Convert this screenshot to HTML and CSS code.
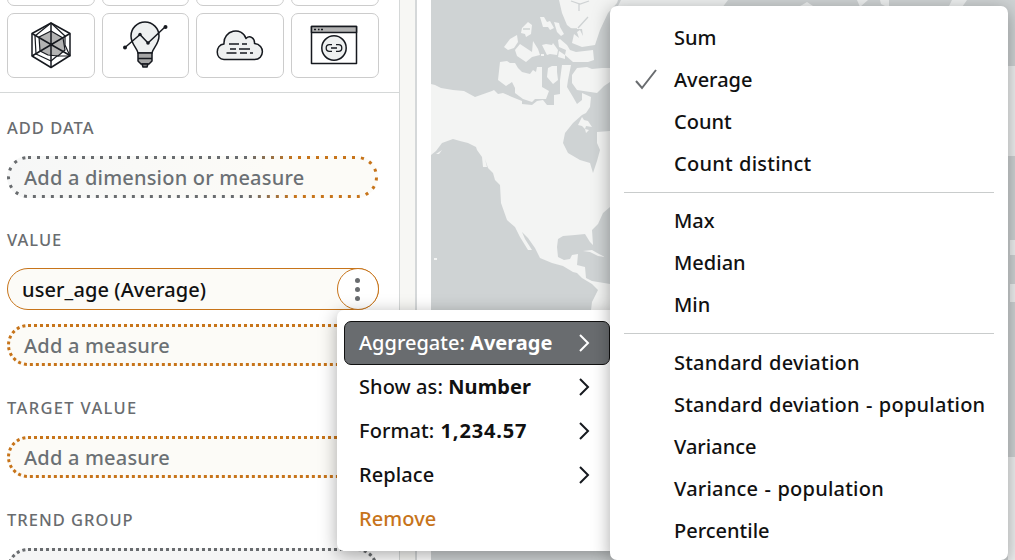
FILE: index.html
```
<!DOCTYPE html>
<html lang="en">
<head>
<meta charset="utf-8">
<title>Field wells</title>
<link rel="stylesheet" href="styles.css">
</head>
<body>
<div class="app">
  <aside class="sidebar">
    <div class="tiles">
      <div class="tile"></div><div class="tile"></div><div class="tile"></div><div class="tile"></div>
      <div class="tile">
        <svg width="88" height="65" viewBox="7 13 88 65" class="ink">
          <path d="M51 23 70 33.500v22L51 67.500 32 56V33.500z" fill="#fff"/>
          <path d="M51 31 63 38 65 50 58 56 48 55 40 51 39 37z" fill="#b3b3b3" stroke-width="1.200"/>
          <path d="M51 23 65 36v9l5 11H57l-6 5-15-7-1-18z" fill="none" stroke-width="1.200"/>
          <path d="M51 23v44M32 33.500l38 22M70 33.500 32 56" fill="none"/>
        </svg>
      </div>
      <div class="tile">
        <svg width="88" height="65" viewBox="102 13 88 65" class="ink">
          <path d="M138 53c-1-5-7-9-7-17a14 14 0 0 1 28 0c0 8-6 12-7 17z" fill="#eef0f0"/>
          <path d="M140 53h12v8l-3 3h-8l-3-3v-8z" fill="#a5a5a5"/><path d="M138 58.500h14"/><path d="M142 64h6l-1 3h-4z" fill="#777"/>
          <path d="M125 47.500 140 34.500 148 43 165 27" fill="none"/>
          <g fill="#16191f" stroke="none"><circle cx="125" cy="47.500" r="2"/><circle cx="140" cy="34.500" r="1.700"/><circle cx="148" cy="43" r="1.800"/><circle cx="165.500" cy="27" r="2"/></g>
        </svg>
      </div>
      <div class="tile">
        <svg width="88" height="65" viewBox="196 13 88 65" class="ink">
          <path d="M224 59.500c-9 0-9-15 0-15.500-1-14 18-18 22-5.500 4-4 9 0 8.500 5 11 1 10 16 0 16z" fill="#eef0f0"/>
          <path d="M229 44h10M242 44h5M230 49h6M239 49h11M226.500 53h10M240 53h7M250 53h3" stroke-width="1.500"/>
        </svg>
      </div>
      <div class="tile">
        <svg width="88" height="65" viewBox="291 13 88 65" class="ink">
          <path d="M311.500 26.500h45v37h-45z" fill="#fff"/><path d="M311.500 26.500h45v6h-45z" fill="#b3b3b3"/>
          <path d="M314 29.500h2M318 29.500h1.500M321 29.500h2"/>
          <circle cx="334" cy="48" r="12.200" fill="#eef0f0"/>
          <path d="M332 44.700h-2.500a3.300 3.300 0 0 0 0 6.600h2.500M336 44.700h2.500a3.300 3.300 0 0 1 0 6.600H336M331 48h6" fill="none" stroke-width="1.300"/>
        </svg>
      </div>
    </div>
    <div class="wells">
      <h2>ADD DATA</h2>
      <div class="well mixed">
        <svg class="outline" width="371" height="42"><defs><linearGradient id="fade"><stop offset=".65" stop-color="#696c6f"/><stop offset=".78" stop-color="#c7741a"/></linearGradient></defs><rect x="1.500" y="1.500" width="368" height="39" rx="19.500"/></svg>
        <span>Add a dimension or measure</span>
      </div>
      <h2>VALUE</h2>
      <div class="field"><span>user_age (Average)</span><button class="more" aria-label="Options"><i></i><i></i><i></i></button></div>
      <div class="well orange"><svg class="outline" width="371" height="42"><rect x="1.500" y="1.500" width="368" height="39" rx="19.500"/></svg><span>Add a measure</span></div>
      <h2 class="spaced">TARGET VALUE</h2>
      <div class="well orange"><svg class="outline" width="371" height="42"><rect x="1.500" y="1.500" width="368" height="39" rx="19.500"/></svg><span>Add a measure</span></div>
      <h2>TREND GROUP</h2>
      <div class="well gray"><svg class="outline" width="371" height="42"><rect x="1.500" y="1.500" width="368" height="39" rx="19.500"/></svg></div>
    </div>
  </aside>
  <div class="gutter"></div>
  <main class="canvas">
    <svg class="map" width="584" height="560" viewBox="431 0 584 560">
      <g fill="#f3f4f3">
        <path d="M431 84 435 85 441 88 453 90 464 91 475 97 492 91 494 90 498 94 503 93 512 97 522 101 522 104 532 105 537 101 543 100 547 105H554V95L560 94V80L562 65 571 65 568 80 567 87 573 97 577 104 582 100V93L591 97 590 107 586 113 582 115 573 123 565 133 563 143 568 153 580 160 590 163 593 173 597 161 600 150 597 143 597 132 610 131V207L603 213 598 224 592 230 593 245 590 242 585 234 575 235 563 236 558 239 557 247 558 257 564 260 570 259 572 255 578 254 577 265 585 267 586 278 592 281 598 282 610 284V310H591L592 302 598 290 592 284 582 278 577 273 573 272 563 266 552 263 540 258 535 248 528 238 522 232 525 239 532 250 528 250 520 237 515 227 507 220 501 203 500 185 495 180 493 173 488 168 485 159 487 167 483 167 482 157 477 150 476 147 468 143 460 141 453 139 442 143 436 151 431 155Z"/>
        <path d="M500 62 507 61 510 63 515 63 518 68 522 72 530 74 533 70 536 72 537 67H542V87L549 91 546 99 535 99 532 102 523 99 515 93 515 88 512 82 506 86 498 80Z"/>
        <path d="m504 47 6-8 7-4 1 7-4 6-6 2ZM515 50l5-6 12 8 1-11 5 8 2 6-8 2-6 5-9-6ZM542 45l4-1 6 1 1-2 5 7-1 5-7-1-3 1ZM540 17l4 0 3 5 3-1 4 7-4 2-2-3-5 0ZM554 22l5 1 1 4 4 7-3 2-4-4ZM522 28l6-6 4 3-1 9-5 3-1-3-4-1ZM558 40l2-1 7 6 3 5 6 2 17-2 1 10-6 2-15 0-8-7 1-5-7-3ZM548 68l4-2 5 0v6l1 8-5 4-6-7ZM559 51l6 4v4l-7-2ZM572 75l5-7 10-1 5 2 10-1h8v14l-6 4-7 7-20-3-5-7ZM541 54h3v2h-3Z"/>
        <path d="M559 0H618L617 3 608 13 600 30 595 45 582 47 572 43 574 34 579 38 577 32 580 30 583 36 582 29H572L567 25 562 13Z"/>
        <path d="m583 251 9-1 7 4 6 3-7-1-8-4ZM582 117l2 3 4 1 4 6-6-1-1 3-3-3-4-1ZM436 154l6-4-3 4ZM434 258h3v2h-3ZM585 129l4 1-3 3Z"/>
      </g>
      <path d="M571 1l9 3 9-3M579 3v8M588 17l-10 11M564 29h13M523 29h7" fill="none" stroke="#cfd3d4" stroke-width="1.300"/>
      <path d="M621 0H728L722 8H617ZM802 5l5-3 6 4h-13ZM857 0h11l-8 7ZM880 0h9v8l-8-4ZM952 0h15l-7 10h-13ZM1008 66h7v90h-7ZM1010 240h5v15h-5ZM1010 284h5v18h-5ZM1008 457h7v103h-7Z" fill="#eef0f0"/>
    </svg>
  </main>
</div>
<div class="menu fieldmenu">
  <div class="row active"><span>Aggregate: <b>Average</b></span><svg width="12" height="20"><path d="m2 2 8 8-8 8"/></svg></div>
  <div class="row"><span>Show as: <b>Number</b></span><svg width="12" height="20"><path d="m2 2 8 8-8 8"/></svg></div>
  <div class="row"><span>Format: <b class="sample">1,234.57</b></span><svg width="12" height="20"><path d="m2 2 8 8-8 8"/></svg></div>
  <div class="row"><span>Replace</span><svg width="12" height="20"><path d="m2 2 8 8-8 8"/></svg></div>
  <div class="row remove"><span>Remove</span></div>
</div>
<div class="menu submenu">
  <div class="opt">Sum</div>
  <div class="opt"><svg class="check" width="24" height="24"><path d="m2 13 6 7L22 2"/></svg>Average</div>
  <div class="opt">Count</div>
  <div class="opt wide">Count distinct</div>
  <hr>
  <div class="opt">Max</div>
  <div class="opt">Median</div>
  <div class="opt">Min</div>
  <hr class="low">
  <div class="opt wide">Standard deviation</div>
  <div class="opt wide">Standard deviation - population</div>
  <div class="opt">Variance</div>
  <div class="opt wide">Variance - population</div>
  <div class="opt">Percentile</div>
</div>
</body>
</html>
```
FILE: styles.css
```
*{box-sizing:border-box}
body{margin:0;width:1015px;height:560px;overflow:hidden;position:relative;background:#fff;color:#111;font:500 20px/42px "Noto Sans","Open Sans",sans-serif}
.app{display:flex;height:560px;overflow:hidden}
.sidebar{width:400px;flex:none;border-right:1px solid #d5d8d8}
.tiles{display:grid;grid-template-columns:repeat(4,87.500px);grid-auto-rows:65px;gap:7px 7.200px;padding-left:7px;height:93px;border-bottom:1px solid #d5d8d8;align-content:end;padding-bottom:14px;overflow:hidden}
.tile{border:1px solid #ccc;border-radius:7px}
.tile svg{display:block;margin:-1px}
.ink{stroke:#16191f;stroke-width:1.500;stroke-linejoin:round}
.wells{padding-left:7px}
h2{margin:0;font-size:16.500px;font-weight:480;letter-spacing:1px;color:#696c6f;height:70px;line-height:84px}
.wells h2:first-child{height:63px;line-height:70px}
.spaced{letter-spacing:1.350px}
.well{position:relative;width:371px;height:42px;border-radius:21px;background:#fcfbf7;color:#6b7074;padding-left:17px;line-height:44px;font-weight:470;letter-spacing:.2px}
.well span{position:relative}
.outline{position:absolute;left:0;top:0;fill:none;stroke:#c7741a;stroke-width:3;stroke-dasharray:3 3}
.mixed{background:linear-gradient(90deg,#f6f7f7,#fcfbf7 70%)}
.mixed .outline{stroke:url(#fade);stroke-dasharray:3 6}
.gray{background:#f5f5f5}
.gray .outline{stroke:#696c6f}
.field{display:flex;justify-content:space-between;width:372px;height:42px;border:1px solid #c7741a;border-radius:21px;background:#fcfbf7;padding-left:14px;line-height:42px;margin-bottom:14px;letter-spacing:.1px}
.more{width:42px;height:42px;margin:-1px;border:1px solid #c7741a;border-radius:50%;background:#fff;display:flex;flex-direction:column;align-items:center;justify-content:center;gap:4px;padding:0 1px 0 0}
.more i{width:5px;height:5px;border-radius:50%;background:#696c6f}
.gutter{width:17px;flex:none;background:#f7f7f4;border-right:2px solid #d5d8d9}
.canvas{padding-left:14px}
.map{display:block;background:#cfd3d4}
.menu{position:absolute;background:#fff;box-shadow:0 4px 18px rgba(0,0,0,.34)}
.fieldmenu{left:337px;top:310px;width:280px;height:241px;border-radius:7px;padding:11px 7px}
.row{height:44px;padding:0 20px 0 15px;display:flex;align-items:center;justify-content:space-between;width:266px;letter-spacing:.08px}
.row svg{fill:none;stroke:#16191f;stroke-width:2}
.sample{letter-spacing:.85px;margin-left:1px}
.active{background:#696c6f;color:#fff;border:1px solid #111;border-radius:7px;padding:0 19px 0 14px;letter-spacing:0}
.active svg{stroke:#fff}
.remove{color:#c7741a}
.submenu{left:610px;top:6px;width:398px;height:554px;border-radius:7px;padding:11px 14px}
.opt{position:relative;padding-left:50px;height:42px;white-space:nowrap}
.wide{letter-spacing:.23px;word-spacing:.8px}
.check{position:absolute;left:10px;top:9px;fill:none;stroke:#696c6f;stroke-width:2}
hr{border:0;border-top:1px solid #c9cccc;margin:7px 0}
.low{margin-bottom:8px}
```
